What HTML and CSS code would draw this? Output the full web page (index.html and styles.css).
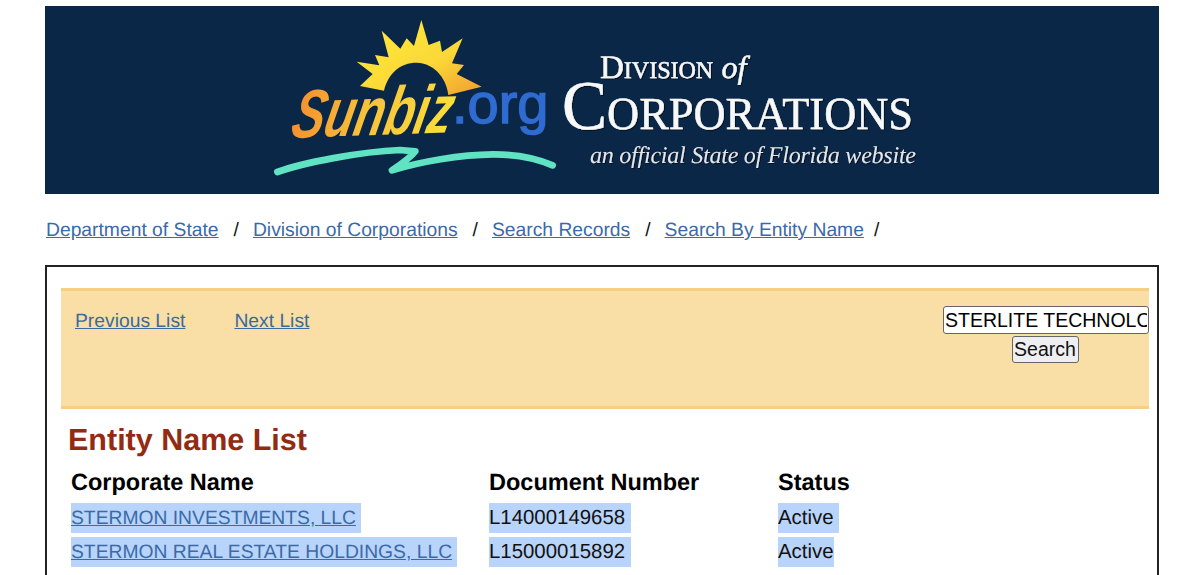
FILE: index.html
```html
<!DOCTYPE html>
<html lang="en">
<head>
<meta charset="utf-8">
<title>Entity Name List</title>
<link rel="stylesheet" href="styles.css">
</head>
<body>
<header class="banner">
<svg class="banner-art" viewBox="45 6 1114 188" width="1114" height="188" role="img" aria-label="Sunbiz.org Division of Corporations">
  <defs>
    <linearGradient id="sunFill" x1="0" y1="0" x2="1" y2="1">
      <stop offset="0" stop-color="#ffee3c"/>
      <stop offset="0.6" stop-color="#fbd737"/>
      <stop offset="1" stop-color="#f29c2e"/>
    </linearGradient>
    <linearGradient id="bizFill" x1="0" y1="0" x2="1" y2="0">
      <stop offset="0" stop-color="#f5902f"/>
      <stop offset="0.45" stop-color="#f7c23a"/>
      <stop offset="1" stop-color="#fbe03a"/>
    </linearGradient>
    <filter id="soft" x="-5%" y="-5%" width="110%" height="110%"><feGaussianBlur stdDeviation="0.35"/></filter>
    <filter id="lift" x="-5%" y="-10%" width="110%" height="125%"><feDropShadow dx="1" dy="1" stdDeviation="0.6" flood-color="#000" flood-opacity="0.6"/></filter>
  </defs>
  <g transform="translate(260 10) scale(0.33333)" filter="url(#soft)">
    <path fill="url(#sunFill)" d="M300 228 L338 192 L290 155 L358 166 L345 135 L386 142 L365 62 L421 116 L440 85 L462 108 L484 30 L506 105 L540 92 L546 126 L608 85 L576 160 L612 165 L590 192 L665 230 L565 255 C562 215 530 160 470 158 C420 158 385 190 372 242 Z"/>
    <path fill="none" stroke="#5fe3c3" stroke-width="20" stroke-linecap="round" stroke-linejoin="round" d="M52 486 C130 458 300 425 420 420 L466 424 C450 445 420 465 396 481 C480 455 600 434 700 433 C770 433 830 445 878 466"/>
  </g>
  <text class="logo-biz" textLength="160" lengthAdjust="spacingAndGlyphs" transform="translate(289 138) rotate(-2) skewX(-14)" fill="url(#bizFill)">Sunbiz</text>
  <text class="logo-org" x="452" y="123" fill="#2f6bd0">.org</text>
  <text class="title-div" x="600" y="78" filter="url(#lift)">D<tspan class="cap-sm">IVISION</tspan> <tspan class="title-of">of</tspan></text>
  <text class="title-corp" x="562" y="129" textLength="351" lengthAdjust="spacingAndGlyphs" filter="url(#lift)">C<tspan class="corp-sm">ORPORATIONS</tspan></text>
  <text class="title-tag" x="590" y="163" textLength="326" filter="url(#lift)">an official State of Florida website</text>
</svg>
</header>

<nav class="crumbs">
  <a href="#">Department of State</a><span class="sep">/</span>
  <a href="#">Division of Corporations</a><span class="sep">/</span>
  <a href="#">Search Records</a><span class="sep">/</span>
  <a href="#">Search By Entity Name</a><span class="sep">/</span>
</nav>

<main class="box">
  <section class="toolbar">
    <div class="pager">
      <a href="#">Previous List</a>
      <a href="#">Next List</a>
    </div>
    <form class="search">
      <input class="search-input" type="text" value="STERLITE TECHNOLOGIES">
      <button class="search-btn" type="button">Search</button>
    </form>
  </section>
  <h2 class="heading">Entity Name List</h2>
  <div class="results">
    <div class="th">Corporate Name</div><div class="th">Document Number</div><div class="th">Status</div>
    <div class="td"><span class="sel sel-name"><a href="#">STERMON INVESTMENTS, LLC</a></span></div><div class="td"><span class="sel sel-doc">L14000149658</span></div><div class="td"><span class="sel sel-status">Active</span></div>
    <div class="td"><span class="sel sel-name"><a href="#">STERMON REAL ESTATE HOLDINGS, LLC</a></span></div><div class="td"><span class="sel sel-doc">L15000015892</span></div><div class="td"><span class="sel">Active</span></div>
  </div>
</main>
</body>
</html>
```
FILE: styles.css
```css
html, body {
  margin: 0;
  height: 575px;
  overflow: hidden;
  background: #fff;
}
body {
  padding: 6px 41px 0 45px;
  box-sizing: border-box;
  font-family: "Liberation Sans", Arial, sans-serif;
  font-size: 19.3px;
  color: #111;
  text-rendering: geometricPrecision;
}
a { color: #3a6ba8; }
.banner {
  height: 188px;
  background: #0b2748;
}
.banner-art { display: block; }
.logo-biz {
  font-family: "Liberation Sans", sans-serif;
  font-weight: 700;
  font-style: italic;
  font-size: 68px;
}
.logo-org {
  font-family: "Liberation Sans", sans-serif;
  font-size: 56px;
  stroke: #2f6bd0;
  stroke-width: 1.4px;
}
.title-div, .title-corp, .title-tag {
  font-family: "Liberation Serif", serif;
  fill: #f7f8f8;
}
.title-div, .title-corp {
  stroke: #f7f8f8;
  stroke-width: 0.5px;
}
.title-div { font-size: 33px; }
.cap-sm { font-size: 24px; }
.title-of { font-style: italic; font-size: 32px; }
.title-corp { font-size: 70px; }
.corp-sm { font-size: 46px; }
.title-tag { font-style: italic; font-size: 24px; fill: #e4e7ea; }

.crumbs {
  display: flex;
  align-items: center;
  height: 23px;
  margin: 25px 0 0 1px;
  line-height: 23px;
}
.sep { margin: 0 14px 0 15px; }
.sep:last-child { margin-left: 10px; }
.box {
  margin-top: 23px;
  height: 310px;
  box-sizing: border-box;
  border: 2px solid #222;
  border-bottom: 0;
  padding: 21px 8px 0 14px;
  overflow: hidden;
}
.toolbar {
  display: flex;
  justify-content: space-between;
  height: 121px;
  box-sizing: border-box;
  padding: 15px 0 0 14px;
  background: #f9dfa6;
  border-top: 3px solid #f6cf82;
  border-bottom: 3px solid #f6cf82;
}
.pager { display: flex; gap: 49px; line-height: 23px; padding-top: 4px; align-self: flex-start; }
.pager a { color: #3b6a9c; }
.search {
  display: flex;
  flex-direction: column;
  align-items: center;
  gap: 2px;
}
.search-input {
  width: 206px;
  height: 28px;
  box-sizing: border-box;
  padding: 0 1px;
  font: 19.5px "Liberation Sans", Arial, sans-serif;
  color: #000;
  background: #fff;
  border: 1px solid #666;
  border-radius: 3px;
}
.search-btn {
  width: 67px;
  height: 27px;
  margin-right: 2px;
  box-sizing: border-box;
  padding: 0;
  font: 19.5px "Liberation Sans", Arial, sans-serif;
  color: #111;
  background: #efeff1;
  border: 1px solid #666;
  border-radius: 3px;
}
.heading {
  margin: 14px 0 0 7px;
  font-size: 30.5px;
  line-height: 34px;
  font-weight: 700;
  color: #932b12;
}
.results {
  display: grid;
  grid-template-columns: 418px 289px 1fr;
  margin: 8px 0 0 10px;
}
.th {
  height: 34px;
  font-size: 23.5px;
  line-height: 34px;
  font-weight: 700;
  color: #000;
}
.td {
  height: 34px;
  padding-top: 4px;
  box-sizing: border-box;
}
.sel {
  display: inline-block;
  height: 30px;
  line-height: 30px;
  font-size: 20.4px;
  background: #b9d4fa;
}
.sel a { font-size: 19.3px; }
.sel-name { padding-right: 5px; }
.sel-doc { padding-right: 6px; }
.sel-status { padding-right: 5px; }
```
